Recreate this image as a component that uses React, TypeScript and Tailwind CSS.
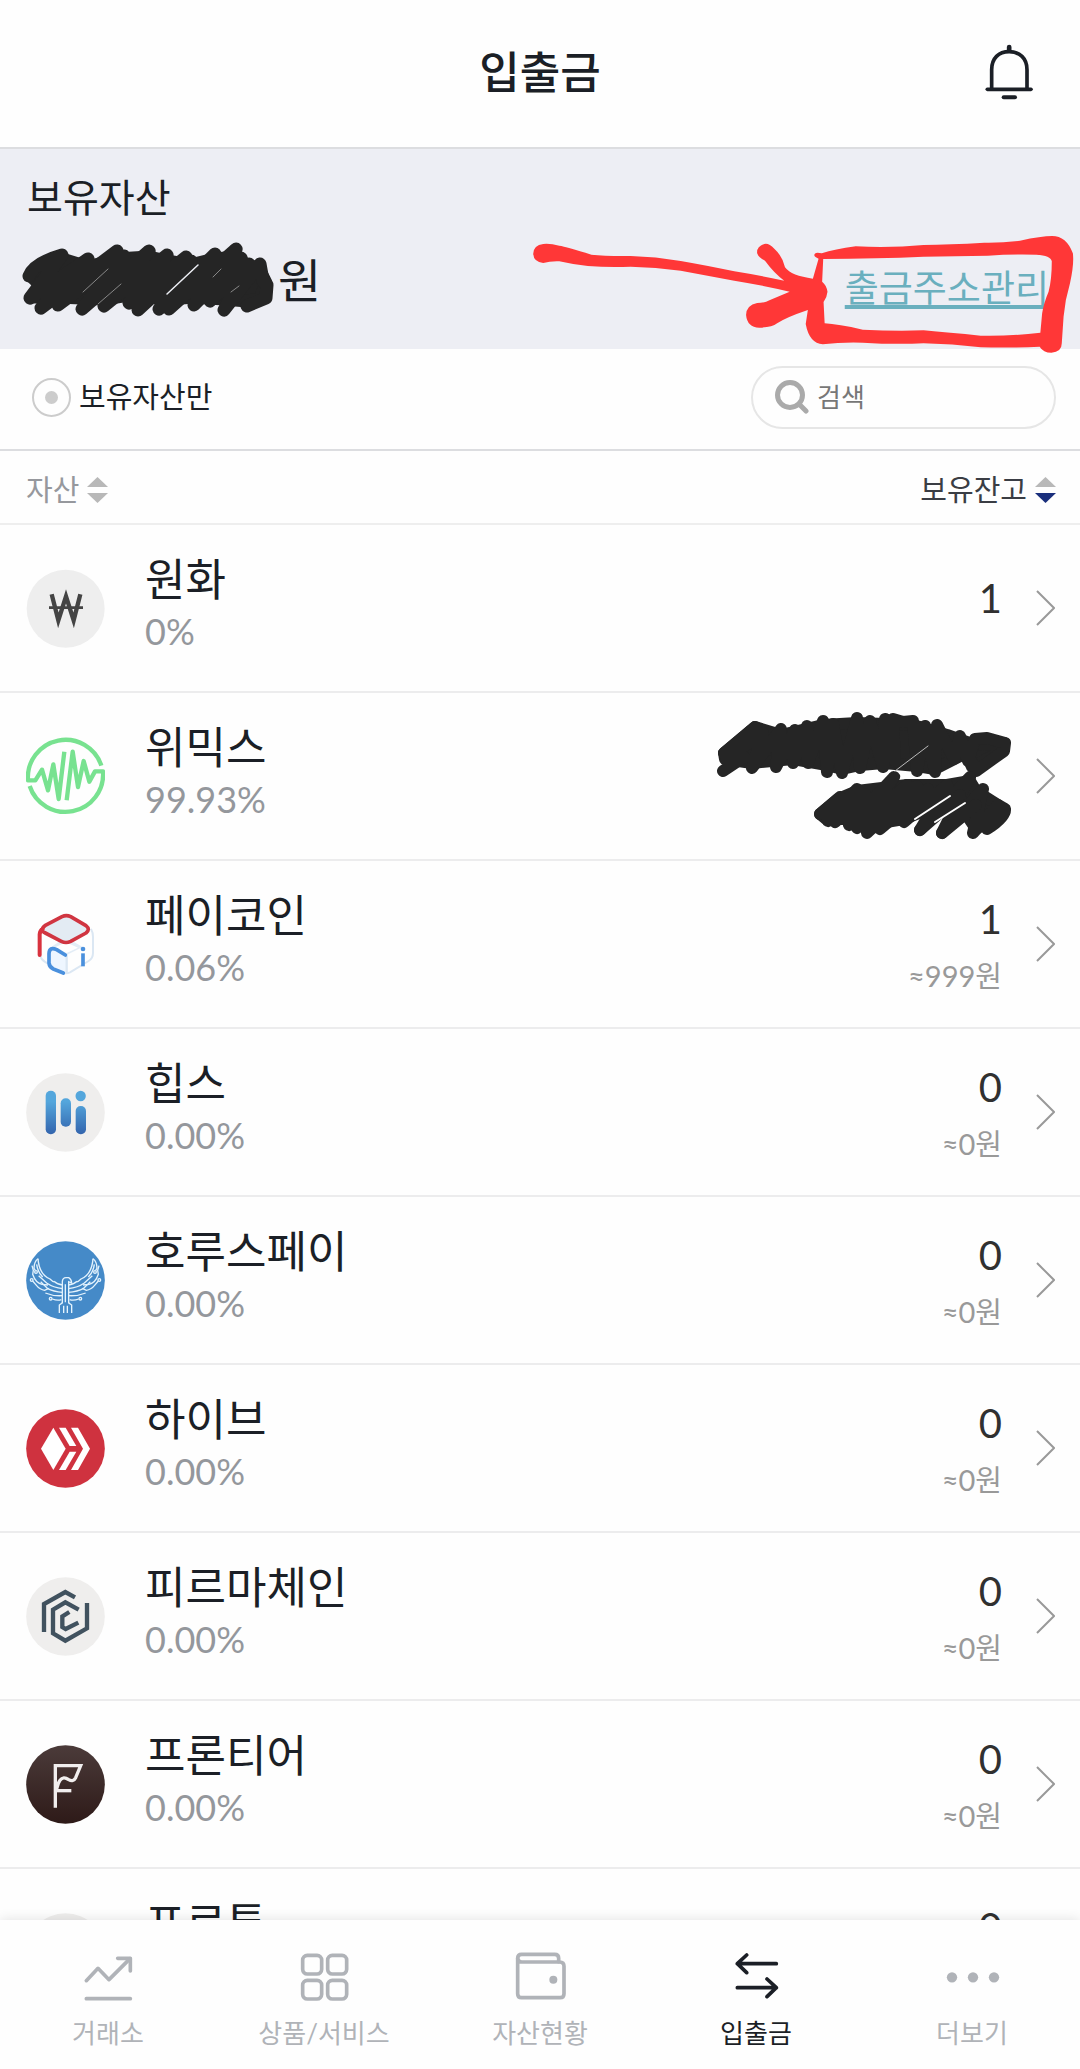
import React, { useState } from 'react';

interface Asset {
  name: string;
  ratio: string;
  balance?: string;
  krw?: string;
  icon: React.ReactNode;
}

const WonIcon = () => (
  <svg viewBox="0 0 237 237" className="size-[79px]" fill="none" stroke="#444">
    <circle cx="119" cy="119" r="117" fill="#eee" stroke="none" />
    <path d="M77 76 L97 154 L120 82 L143 154 L163 76" strokeWidth="13" />
    <path d="M69 116 H171" strokeWidth="8" />
  </svg>
);

const WemixIcon = () => (
  <svg
    viewBox="0 0 237 237"
    className="size-[79px]"
    fill="none"
    stroke="#78e290"
    strokeWidth="13"
    strokeLinejoin="round"
  >
    <path d="M226 86 A113 113 0 0 0 6 130 H28 L48 98 L66 160 L82 82 L98 186 L115 44" />
    <path d="M122 190 L140 44 L156 150 L173 72 L190 134 L207 103 H231 A113 113 0 0 1 11 147" />
  </svg>
);

const PaycoinIcon = () => (
  <svg viewBox="0 0 237 237" className="size-[79px]" fill="none" strokeLinecap="round" strokeLinejoin="round">
    <path d="M196 74 Q201 82 201 96 V144 Q201 160 188 168 L132 202 Q120 208 108 202 L56 170 Q44 162 42 150" stroke="#dbe7f3" strokeWidth="6" />
    <path d="M72 128 L108 104 Q120 97 132 104 L170 126 L122 150 Z" fill="#e3edf6" />
    <path d="M84 128 L120 112 L156 128 L122 144 Z" fill="#fff" />
    <path d="M120 152 V204 L84 192 Q72 184 72 170 V132 Q80 124 92 132 Z" fill="#eef6ff" />
    <path d="M122 152 V202" stroke="#dbe7f3" strokeWidth="7" />
    <path
      d="M48 74 Q50 66 58 61 L108 35 Q121 29 134 35 L180 62 Q194 73 180 84 L134 109 Q120 116 106 109 L58 84 Q48 79 48 74 Z"
      fill="#e3ebf3"
      stroke="#d03541"
      strokeWidth="11"
    />
    <path d="M41 150 V88 Q42 76 50 72" stroke="#d8323e" strokeWidth="12" />
    <path d="M118 150 L92 134 Q70 124 69 146 V174 Q70 186 82 192 L112 204" stroke="#4a90dd" strokeWidth="11" />
    <circle cx="171" cy="132" r="7" fill="#4a90dd" />
    <path d="M171 145 V184" stroke="#4a90dd" strokeWidth="11" strokeLinecap="butt" />
  </svg>
);

const HippsIcon = () => (
  <svg viewBox="0 0 237 237" className="size-[79px]">
    <defs>
      <linearGradient id="hipps" gradientUnits="userSpaceOnUse" x1="0" y1="53" x2="0" y2="184">
        <stop offset="0.25" stopColor="#54a6dc" />
        <stop offset="1" stopColor="#3364ad" />
      </linearGradient>
    </defs>
    <circle cx="118.500" cy="118.500" r="118" fill="#efeeed" />
    <g fill="url(#hipps)">
      <rect x="59" y="53" width="31" height="131" rx="15" />
      <rect x="104" y="76" width="31" height="85" rx="15" />
      <rect x="149" y="99" width="31" height="85" rx="15" />
      <circle cx="164" cy="69" r="15.500" />
    </g>
  </svg>
);

const HorusWing = () => (
  <>
    <path d="M54 71 C56 100 66 122 90 132 Q100 142 104 140 Q112 148 128 150" />
    <path d="M54 71 Q42 80 42 100 L46 106" />
    <circle cx="48" cy="111" r="4" />
    <path d="M50 88 C52 106 60 118 68 126" />
    <path d="M36 92 L40 106 L38 118 C44 136 56 146 66 148 L84 150" />
    <circle cx="35" cy="135" r="4" />
    <path d="M38 138 L50 152 Q60 164 74 166 L86 160" />
    <path d="M56 122 L80 144 Q100 158 128 161" />
    <path d="M62 140 L82 160 Q100 170 128 172" />
    <path d="M76 174 Q100 184 128 182" />
    <circle cx="92" cy="191" r="4" />
    <path d="M97 192 Q112 198 124 194" />
    <path d="M118 234 V210 L128 203" />
    <path d="M131 212 V234" />
  </>
);

const HorusIcon = () => (
  <svg viewBox="18 18 237 237" className="size-[79px]" fill="none" stroke="#e4f3fd" strokeWidth="4">
    <circle cx="136.500" cy="136.500" r="118" fill="#458ac8" stroke="none" />
    <HorusWing />
    <g transform="translate(273 0) scale(-1 1)">
      <HorusWing />
    </g>
    <path d="M127 204 V140 Q128 128 138 128 H146 Q154 132 155 144 L146 140 V204" fill="#458ac8" />
    <path d="M136 148 V202" />
  </svg>
);

const HiveIcon = () => (
  <svg viewBox="0 0 237 237" className="size-[79px]">
    <circle cx="118.500" cy="118.500" r="118" fill="#cf323f" />
    <g fill="#fff">
      <path d="M45 119 L82 56 L119 119 L82 183 Z" />
      <path d="M99 56 H119 L151 111 H131 Z" />
      <path d="M131 128 H151 L119 183 H99 Z" />
      <path d="M135 56 H156 L192 119 L156 183 H135 L171 119 Z" />
    </g>
  </svg>
);

const FirmaIcon = () => (
  <svg viewBox="0 0 237 237" className="size-[79px]" fill="none" stroke="#41525f" strokeWidth="13">
    <circle cx="118.500" cy="118.500" r="118" fill="#efeeed" stroke="none" />
    <path d="M54 165 V81 L118 45 L147 61" />
    <path d="M158 98 L118 76 L81 98 V169 L118 191 L183 154 V78" />
    <path d="M130 105 L109 118 V150 L119 156 L157 137" />
  </svg>
);

const FrontierIcon = () => (
  <svg viewBox="0 0 237 237" className="size-[79px]" fill="none" stroke="#f1eeee" strokeWidth="10">
    <defs>
      <linearGradient id="frontier" x1="0" y1="0" x2="0" y2="1">
        <stop offset="0" stopColor="#4b3b3a" />
        <stop offset="1" stopColor="#2e1a18" />
      </linearGradient>
    </defs>
    <circle cx="118.500" cy="118.500" r="118" fill="url(#frontier)" stroke="none" />
    <path d="M88 188 V62 H164 L149 98 Q142 112 128 104 Q112 92 102 106 Q96 114 92 132" />
    <path d="M88 137 H136" />
  </svg>
);

const ProtonIcon = () => (
  <svg viewBox="0 0 237 237" className="size-[79px]">
    <circle cx="118.500" cy="118.500" r="118" fill="#efeeed" />
  </svg>
);

const assets: Asset[] = [
  { name: '원화', ratio: '0%', balance: '1', icon: <WonIcon /> },
  { name: '위믹스', ratio: '99.93%', icon: <WemixIcon /> },
  { name: '페이코인', ratio: '0.06%', balance: '1', krw: '≈999원', icon: <PaycoinIcon /> },
  { name: '힙스', ratio: '0.00%', balance: '0', krw: '≈0원', icon: <HippsIcon /> },
  { name: '호루스페이', ratio: '0.00%', balance: '0', krw: '≈0원', icon: <HorusIcon /> },
  { name: '하이브', ratio: '0.00%', balance: '0', krw: '≈0원', icon: <HiveIcon /> },
  { name: '피르마체인', ratio: '0.00%', balance: '0', krw: '≈0원', icon: <FirmaIcon /> },
  { name: '프론티어', ratio: '0.00%', balance: '0', krw: '≈0원', icon: <FrontierIcon /> },
  { name: '프로톤', ratio: '0.00%', balance: '0', krw: '≈0원', icon: <ProtonIcon /> }
];

const BellIcon = () => (
  <svg viewBox="40 28 150 174" className="h-[58px] w-[50px]" fill="none" stroke="#1b1f26" strokeWidth="11" strokeLinecap="round">
    <path d="M63 166 V108 C63 74 84 54 115.500 54 C147 54 169 74 169 108 V166" />
    <path d="M50 167 H181" />
    <path d="M115.500 40 V48" strokeWidth="14" />
    <path d="M99 191 H133" strokeWidth="12" />
  </svg>
);

const SearchIcon = () => (
  <svg viewBox="0 0 34 34" className="size-[34px] shrink-0" fill="none" stroke="#aaa" strokeWidth="5">
    <circle cx="15" cy="15" r="12.500" />
    <path d="M24 24 L31 31" strokeLinecap="round" />
  </svg>
);

const SortIcon = ({ down }: { down: string }) => (
  <svg viewBox="0 0 21 26" className="h-[26px] w-[21px]">
    <path d="M10.500 0 L21 10 H0 Z" fill="#b8b8b8" />
    <path d="M0 16 H21 L10.500 26 Z" fill={down} />
  </svg>
);

const ChevronIcon = () => (
  <svg viewBox="0 0 19 36" className="h-9 w-[19px] shrink-0" fill="none" stroke="#999" strokeWidth="2">
    <path d="M1 1 L18 18 L1 35" />
  </svg>
);

// marker scribble over the total amount
const TotalScribble = () => (
  <svg
    viewBox="0 0 256 78"
    className="h-[78px] w-[256px]"
    stroke="#252525"
    strokeWidth="13"
    strokeLinecap="round"
    strokeLinejoin="round"
  >
    <path
      d="M12 36 L42 18 L68 26 L97 18 L129 16 L147 20 L170 24 L195 18 L216 16 L229 28 L240 30 L246 42 L240 58 L227 60 L204 58 L174 56 L149 58 L109 54 L84 58 L38 56 L14 56 L20 44 Z"
      fill="#252525"
    />
    <path
      d="M9 35 Q14 22 42 14 L10 57 L68 18 L21 67 L97 10 L38 64 L104 15 L62 68 L129 10 L84 65 L147 14 L109 62 L166 16 L118 69 L171 20 L139 68 L195 13 L149 68 L216 8 L174 64 L221 17 L190 60 L229 23 L204 69 L240 23 L243 40 L247 44 L246 57 L227 65"
      fill="none"
    />
    <path d="M63 51 L88 28 M78 63 L101 43 M193 36 L201 28 M211 51 L219 45" fill="none" stroke="#888" strokeWidth="1" />
    <path d="M147 53 L178 24" fill="none" stroke="#eceef4" strokeWidth="1.500" />
  </svg>
);

// marker scribble over a balance and its won value
const BalanceScribble = () => (
  <svg
    viewBox="0 0 300 130"
    className="h-[130px] w-[300px]"
    stroke="#252525"
    strokeWidth="12"
    strokeLinecap="round"
    strokeLinejoin="round"
  >
    <path
      d="M10 42 L41 16 L67 24 L109 14 L143 12 L199 14 L233 24 L261 34 L290 32 L288 40 L258 56 L252 42 L221 58 L203 55 L170 52 L146 54 L128 58 L113 54 L79 48 L38 52 L11 48 Z"
      fill="#252525"
    />
    <path
      d="M9 60 L30 46 M10 42 L41 16 L12 48 L49 22 L38 57 L67 18 L62 56 L81 19 L79 52 L93 15 L94 52 L109 10 L113 61 L119 13 L128 62 L143 7 L146 57 L156 10 L169 56 L171 8 L181 50 L179 8 L189 11 L199 10 L203 60 L211 15 L221 61 L223 14 L240 48 L246 25 L254 50 L261 28 L273 27 L291 32 L290 40 L262 60 L256 48"
      fill="none"
    />
    <path d="M106 103 L124 88 L143 80 L193 74 L233 74 L256 70 L262 80 L284 94 L288 102 L262 118 L250 100 L230 92 L190 108 L166 112 L153 116 L134 108 L112 108 Z" fill="#252525" />
    <path
      d="M106 103 L126 86 L114 110 L143 78 L121 111 L151 83 L135 114 L180 66 L143 117 L193 74 L153 122 L203 75 L166 118 L214 78 L190 111 L233 74 L206 119 L256 66 L228 122 L269 78 L259 122 L284 94 L291 98 Q292 106 273 118"
      fill="none"
    />
    <path d="M206 119 L246 84 M228 122 L262 94" fill="none" />
    <path d="M181 60 L214 35" fill="none" stroke="#bbb" strokeWidth="1" />
    <path d="M201 108 L236 85 M221 111 L251 92" fill="none" stroke="#fff" strokeWidth="2" />
  </svg>
);

// red arrow and frame around the address link
const RedMarker = () => (
  <svg
    viewBox="0 0 1568 420"
    preserveAspectRatio="none"
    className="pointer-events-none absolute top-[71px] right-0 h-[140px] w-[560px]"
    fill="#ff3737"
    fillRule="evenodd"
  >
    <path
      d="M65 72 Q38 76 37 101 Q38 126 65 129 Q85 123 110 124 Q150 134 190 138 Q250 143 310 140 Q380 142 450 152 L600 182 Q680 196 755 215 L700 240 Q684 249 664 249 Q634 255 633 285 Q636 322 670 323 Q705 323 720 310 Q745 292 806 270 L800 312 Q810 370 848 373 Q900 366 960 368 Q1050 374 1130 370 Q1210 372 1290 382 Q1380 384 1455 380 Q1465 398 1488 398 Q1517 396 1517 370 L1522 290 Q1526 240 1540 190 Q1552 130 1548 100 Q1530 48 1490 48 Q1460 48 1400 62 Q1350 69 1300 68 Q1200 74 1130 75 Q1040 84 940 79 Q880 88 845 100 Q824 94 824 106 Q825 112 836 116 L820 176 Q760 168 742 142 Q735 108 712 86 Q696 68 684 72 Q662 80 664 100 Q668 113 686 122 Q712 160 740 182 Q670 166 600 154 Q520 136 450 123 Q380 110 310 108 Q240 109 200 104 Q130 80 110 77 Q85 70 65 72 Z
      M849 117 Q1000 116 1130 110 Q1220 108 1310 107 Q1380 102 1446 104 Q1486 106 1489 124 Q1489 180 1480 215 Q1466 250 1462 280 L1457 338 Q1370 349 1290 347 Q1200 338 1130 331 Q1050 334 960 329 Q890 312 853 310 L850 246 Q860 230 861 215 Q858 195 846 185 Z"
    />
  </svg>
);

const navItems = [
  {
    label: '거래소',
    icon: (
      <>
        <path d="M7 83 L42 46 L75 80 L138 17" />
        <path d="M101 16 H139 V54" />
        <path d="M7 137 H139" />
      </>
    )
  },
  {
    label: '상품/서비스',
    icon: (
      <>
        <rect x="8" y="7" width="57" height="56" rx="14" />
        <rect x="83" y="7" width="57" height="56" rx="14" />
        <rect x="8" y="82" width="57" height="56" rx="14" />
        <rect x="83" y="82" width="57" height="56" rx="14" />
      </>
    )
  },
  {
    label: '자산현황',
    icon: (
      <>
        <path d="M5 16 Q5 4 17 4 H116 Q128 4 128 16 V26" />
        <path d="M5 16 V122 Q5 134 17 134 H132 Q144 134 144 122 V40 Q144 27 131 27 H17 Q5 27 5 16" />
        <circle cx="112" cy="80" r="12" fill="currentColor" stroke="none" />
      </>
    )
  },
  {
    label: '입출금',
    active: true,
    icon: (
      <>
        <path d="M133 32 H16 M44 6 L16 32 L44 59" />
        <path d="M16 104 H133 M105 78 L133 104 L105 131" />
      </>
    )
  },
  {
    label: '더보기',
    icon: (
      <g fill="currentColor" stroke="none">
        <circle cx="12" cy="73" r="15.500" />
        <circle cx="75" cy="73" r="15.500" />
        <circle cx="138" cy="73" r="15.500" />
      </g>
    )
  }
];

const App: React.FC = () => {
  const [onlyOwned, setOnlyOwned] = useState(false);
  const [keyword, setKeyword] = useState('');

  return (
    <div className="flex h-screen flex-col bg-[#fefefe] font-['Lato','Noto_Sans_CJK_KR',sans-serif] text-[#1b1f26]">
      <header className="grid h-[149px] shrink-0 grid-cols-[1fr_auto_1fr] items-center border-b-2 border-[#dcdde0] px-[46px] pb-1">
        <h1 className="col-start-2 text-[44px] leading-[60px] font-medium">입출금</h1>
        <button type="button" aria-label="알림" className="justify-self-end">
          <BellIcon />
        </button>
      </header>

      <main className="min-h-0 flex-1 overflow-x-hidden overflow-y-auto [scrollbar-width:none]">
        <section className="relative flex h-[200px] items-end justify-between bg-[#edeef4] pr-[31px] pl-5">
          <div>
            <h2 className="pl-[7px] text-[39px] leading-[48px]">보유자산</h2>
            <p className="mt-5 mb-[30px] flex items-center gap-[2px] text-[47px] leading-[78px]">
              <TotalScribble />
              원
            </p>
          </div>
          <a
            href="#address"
            className="mb-[35px] text-[37px] leading-[52px] text-[#6aafbe] underline decoration-4 underline-offset-3"
          >
            출금주소관리
          </a>
          <RedMarker />
        </section>

        <div className="flex h-[102px] items-center justify-between border-b-2 border-[#dcdde0] pr-6 pb-1 pl-8">
          <label className="flex items-center gap-2 text-[29px] leading-10">
            <input
              type="checkbox"
              checked={onlyOwned}
              onChange={(e) => setOnlyOwned(e.target.checked)}
              className="flex size-[39px] appearance-none items-center justify-center rounded-full border-2 border-[#ccc] before:size-[13px] before:rounded-full before:bg-[#ccc] checked:before:bg-[#1a2f7c]"
            />
            보유자산만
          </label>
          <label className="flex h-[63px] w-[305px] items-center gap-2 rounded-full border-2 border-[#e6e6e6] px-[22px]">
            <SearchIcon />
            <input
              type="text"
              aria-label="검색"
              placeholder="검색"
              value={keyword}
              onChange={(e) => setKeyword(e.target.value)}
              className="w-full min-w-0 text-[26px] leading-9 outline-none placeholder:text-[#777]"
            />
          </label>
        </div>

        <table className="w-full border-separate border-spacing-0">
          <thead>
            <tr>
              <th className="h-[74px] border-b-2 border-[#eee] p-0 pt-1.5 pl-[26px] text-left font-normal">
                <button type="button" className="flex items-center gap-2 text-[29px] leading-10 text-[#96989d]">
                  자산
                  <SortIcon down="#b8b8b8" />
                </button>
              </th>
              <th className="h-[74px] border-b-2 border-[#eee] p-0 pt-1.5 pr-6 font-normal">
                <button type="button" className="ml-auto flex items-center gap-2 text-[29px] leading-10 text-[#3a3d44]">
                  보유잔고
                  <SortIcon down="#1a2f7c" />
                </button>
              </th>
            </tr>
          </thead>
          <tbody>
            {assets.map((asset) => (
              <tr key={asset.name}>
                <td className="h-[168px] border-b-2 border-[#ececed] p-0 pl-[26px]">
                  <div className="flex items-center gap-10">
                    {asset.icon}
                    <div className="pb-2.5">
                      <div className="text-[44px] leading-[56px]">{asset.name}</div>
                      <div className="text-[36px] leading-[48px] text-[#94979c]">{asset.ratio}</div>
                    </div>
                  </div>
                </td>
                <td className="h-[168px] border-b-2 border-[#ececed] p-0 pr-[25px]">
                  <div className="flex items-center justify-end gap-[34px] text-right">
                    {asset.balance ? (
                      <div className={asset.krw ? 'pt-1' : 'pb-5'}>
                        <div className="text-[40px] leading-[56px] text-[#303030]">{asset.balance}</div>
                        {asset.krw && <div className="mt-1 text-[29px] leading-[50px] text-[#999]">{asset.krw}</div>}
                      </div>
                    ) : (
                      <div className="-mr-3">
                        <BalanceScribble />
                      </div>
                    )}
                    <ChevronIcon />
                  </div>
                </td>
              </tr>
            ))}
          </tbody>
        </table>
      </main>

      <nav className="relative grid h-[149px] shrink-0 grid-cols-5 bg-[#fefefe] shadow-[0_0_12px_rgba(0,0,0,0.12)]">
        {navItems.map((item) => (
          <button
            key={item.label}
            type="button"
            className={
              item.active
                ? 'flex flex-col items-center gap-4 pt-[33px] text-[#1b1f26]'
                : 'flex flex-col items-center gap-4 pt-[33px] text-[#b0b3b8]'
            }
          >
            <svg
              viewBox="0 0 144 144"
              className="size-12 overflow-visible"
              fill="none"
              stroke="currentColor"
              strokeWidth="11"
              strokeLinecap="round"
              strokeLinejoin="round"
            >
              {item.icon}
            </svg>
            <span className="text-[26px] leading-8">{item.label}</span>
          </button>
        ))}
      </nav>
    </div>
  );
};

export default App;
